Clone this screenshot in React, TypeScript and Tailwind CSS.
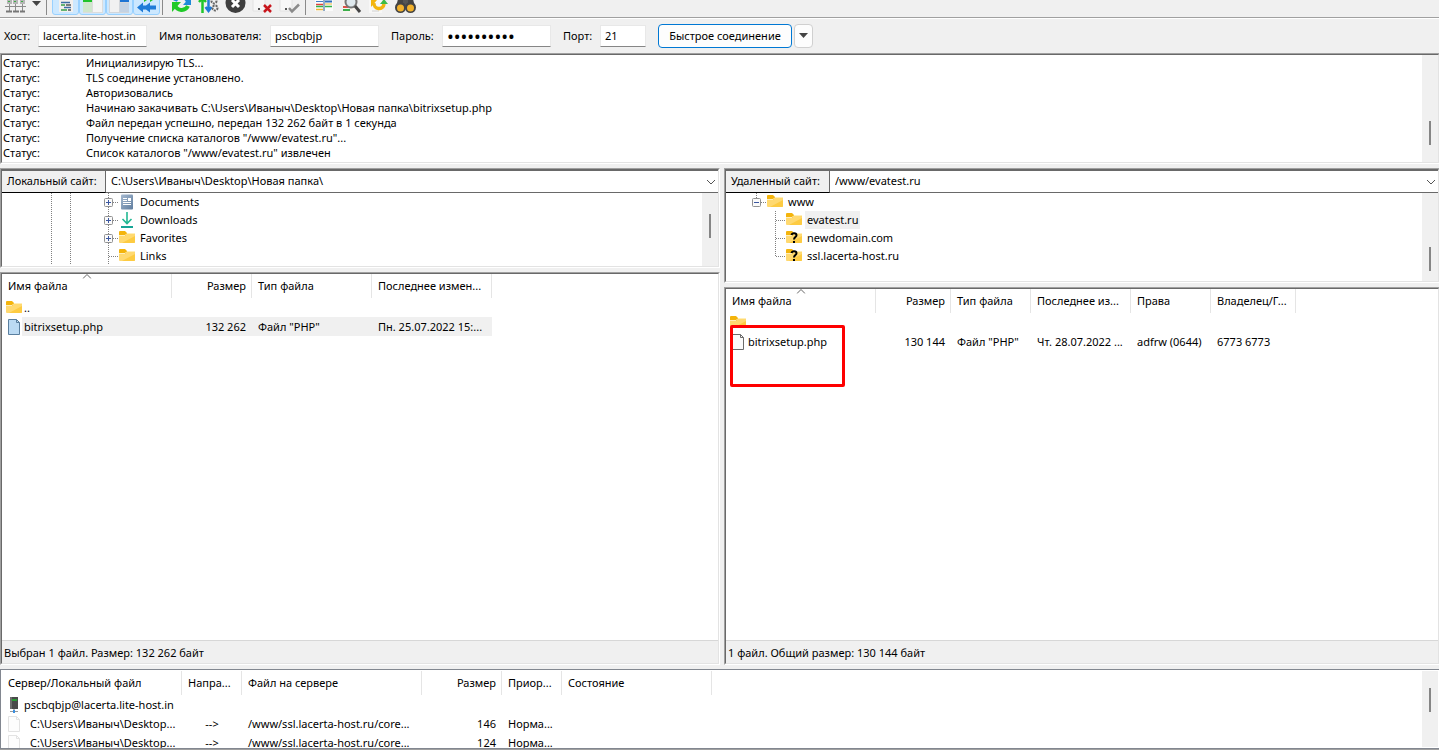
import type { ReactNode } from "react";

const Sunken = ({ className = "", children }: { className?: string; children: ReactNode }) => (
	<div
		className={`flex flex-col border border-t-[#a0a0a0] border-l-[#a0a0a0] border-r-white border-b-white ${className}`}
	>
		<div className="flex-1 min-h-0 flex flex-col relative bg-white border border-t-[#696969] border-l-[#696969] border-r-[#e3e3e3] border-b-[#e3e3e3]">
			{children}
		</div>
	</div>
);

const Scrollbar = ({ className }: { className: string }) => (
	<div className={`w-4 shrink-0 bg-[#f0f0f0] flex flex-col items-center ${className}`}>
		<div className="w-[2px] h-6 bg-[#858585]" />
	</div>
);

/* ---------- icons ---------- */

const Folder = ({ unknown = false }: { unknown?: boolean }) => (
	<svg width="16" height="16" viewBox="0 0 16 16" className="shrink-0">
		<path d="M0 2a1 1 0 0 1 1-1h5l2 2h7a1 1 0 0 1 1 1v4H0z" fill="#f4b40c" />
		<path d="M0 6h6l2-2h8v8a1 1 0 0 1-1 1H1a1 1 0 0 1-1-1z" fill="#ffd970" />
		<path d="M0 5.500h6l2-2h8" fill="none" stroke="#ffeeb8" strokeWidth="1" />
		<path d="M3 13h12a1 1 0 0 0 1-1V6z" fill="#fdcb42" />
		{unknown && (
			<>
				<path
					d="M5.500 5C6 2.500 10.500 2.500 10.500 5.200C10.500 7 8 7 8 9.500"
					fill="none"
					stroke="#000"
					strokeWidth="2"
				/>
				<rect x="7" y="11" width="2" height="2" fill="#000" />
			</>
		)}
	</svg>
);

const FileIcon = ({ fill, stroke }: { fill: string; stroke: string }) => (
	<svg width="16" height="16" viewBox="0 0 16 16" className="shrink-0">
		<path d="M2.500 .5h8l3 3v12h-11z" fill={fill} stroke={stroke} />
		<path d="M10.500 .5v3h3" fill="none" stroke={stroke} />
	</svg>
);

const DocumentsIcon = () => (
	<svg width="16" height="16" viewBox="0 0 16 16" className="shrink-0">
		<defs>
			<linearGradient id="doc" x1="0" y1="0" x2="1" y2="1">
				<stop offset="0" stopColor="#a5b9d0" />
				<stop offset="1" stopColor="#5f7d9f" />
			</linearGradient>
		</defs>
		<rect x="2" y="0.500" width="12" height="15" rx="1" fill="url(#doc)" />
		<path d="M4 4.500h4M4 6.500h4M4 8.500h8M4 10.500h8" stroke="#fff" />
		<rect x="9" y="4" width="3" height="3" fill="#fff" />
	</svg>
);

const DownloadsIcon = () => (
	<svg width="16" height="16" viewBox="0 0 16 16" className="shrink-0">
		<path d="M8 0v11M3.500 7L8 11.500L12.500 7" fill="none" stroke="#22b893" strokeWidth="1.600" />
		<path d="M2 15h12" stroke="#16a596" strokeWidth="2" />
	</svg>
);

const ServerIcon = () => (
	<svg width="16" height="16" viewBox="0 0 16 16" className="shrink-0">
		<rect x="4" y="0" width="8" height="12" fill="#4a4a4a" />
		<rect x="4" y="0" width="2" height="12" fill="#6d6d6d" />
		<path d="M6 3h5" stroke="#2a9a34" strokeWidth="2" />
		<path d="M8 12v3" stroke="#777" />
		<path d="M4 14.500h8" stroke="#9a9a9a" />
		<rect x="7" y="13" width="2" height="3" fill="#3b8fe0" />
	</svg>
);

const Chevron = () => (
	<svg
		width="10"
		height="6"
		viewBox="0 0 10 6"
		className="absolute right-[2px] top-2 pointer-events-none"
	>
		<path d="M1 1l4 4l4-4" fill="none" stroke="#555" />
	</svg>
);

const SortArrow = () => (
	<svg
		width="9"
		height="5"
		viewBox="0 0 9 5"
		className="absolute top-0 left-1/2 -translate-x-1/2"
	>
		<path d="M.5 4.500l4-4l4 4" fill="none" stroke="#666" />
	</svg>
);

const Caret = () => (
	<svg width="9" height="5" viewBox="0 0 9 5">
		<path d="M0 0h9L4.500 5z" fill="#444" />
	</svg>
);

const Doc = () => <path d="M1 0h12v18H1z" fill="#f7f7f7" stroke="#e2e2e2" />;

type Tool = { label: string; art: ReactNode };

const toggles: Tool[] = [
	{
		label: "Журнал сообщений",
		art: (
			<>
				<rect x="4" y="0" width="14" height="19" fill="#f3f0ee" />
				<path d="M6 9.500h9M9 14.500h7" stroke="#3c6ea5" strokeWidth="1.500" />
				<path d="M6 12h4M6 17h6" stroke="#36a04b" strokeWidth="1.500" />
				<path d="M11 12h5M13 17h3" stroke="#555" strokeWidth="1.500" />
			</>
		),
	},
	{
		label: "Дерево локальных каталогов",
		art: (
			<>
				<rect x="1" y="0" width="20" height="20" fill="#dcdcdc" />
				<rect x="1" y="0" width="9" height="9" fill="#1fc32a" />
				<rect x="1" y="9" width="9" height="10" fill="#cfe6cc" />
				<rect x="11" y="0" width="9" height="19" fill="#f4f4f4" />
			</>
		),
	},
	{
		label: "Дерево удаленных каталогов",
		art: (
			<>
				<rect x="0" y="0" width="20" height="20" fill="#d2d6db" />
				<rect x="1" y="0" width="9" height="19" fill="#f1f1f1" />
				<rect x="11" y="0" width="9" height="9" fill="#1d74d4" />
				<rect x="11" y="10" width="9" height="9" fill="#c3d2e3" />
			</>
		),
	},
	{
		label: "Очередь передачи",
		art: (
			<>
				<path d="M1 3h7V0l6 5l-6 4V7H1z" fill="#22c02c" />
				<path d="M11 3h3V0l6 5l-6 4V7h-3z" fill="#22c02c" />
				<path d="M1 14.500L7 9.500v3h3l4-3v3h6v4h-6v3l-4-3H7v3z" fill="#1f7bd8" />
			</>
		),
	},
];

const actions: Tool[] = [
	{
		label: "Обновить",
		art: (
			<>
				<path d="M4 8a7 7 0 0 1 13 1" fill="none" stroke="#1f8ad8" strokeWidth="4" />
				<path d="M20 3v9h-8z" fill="#1f8ad8" />
				<path d="M4 12a7 7 0 0 0 13 1" fill="none" stroke="#1fca28" strokeWidth="4" />
				<path d="M1 19V9h9z" fill="#1fca28" />
			</>
		),
	},
	{
		label: "Обработка очереди",
		art: (
			<>
				<path d="M4.500 20V5M1 9l3.500-4L8 9" fill="none" stroke="#20c52b" strokeWidth="2.500" />
				<path d="M10.500 1v16M7.500 14l3 4l3-4" fill="none" stroke="#1f7bd8" strokeWidth="2.500" />
				<circle cx="16" cy="8" r="2.500" fill="none" stroke="#666" strokeWidth="2" strokeDasharray="2 1" />
				<circle cx="17" cy="15" r="2.500" fill="none" stroke="#666" strokeWidth="2" strokeDasharray="2 1" />
			</>
		),
	},
	{
		label: "Отменить",
		art: (
			<>
				<circle cx="10.500" cy="10" r="10" fill="#3f3f3f" />
				<path d="M7 7l7 7M14 7l-7 7" stroke="#fff" strokeWidth="3" />
			</>
		),
	},
	{
		label: "Отключиться",
		art: (
			<>
				<Doc />
				<rect x="6" y="15" width="2" height="2" fill="#555" />
				<path d="M12 12l7 7M19 12l-7 7" stroke="#c8161d" strokeWidth="2.500" />
			</>
		),
	},
	{
		label: "Переподключиться",
		art: (
			<>
				<Doc />
				<rect x="6" y="15" width="2" height="2" fill="#555" />
				<path d="M10 15l3 3.500l7-7" fill="none" stroke="#8b8b8b" strokeWidth="2.500" />
			</>
		),
	},
];

const views: Tool[] = [
	{
		label: "Сравнение каталогов",
		art: (
			<>
				<rect x="1" y="0" width="18" height="18" fill="#fbfbfb" />
				<path d="M2 8.500h7" stroke="#3e7fc9" />
				<path d="M2 11.500h7" stroke="#e2433b" strokeWidth="1.500" />
				<path d="M2 13.500h7M11 13.500h7" stroke="#35b24a" strokeWidth="1.500" />
				<path d="M11 8.500h7" stroke="#2f6fbd" strokeWidth="2" />
				<path d="M11 11h7" stroke="#efb731" />
				<path d="M2 16.500h7" stroke="#efb731" strokeWidth="1.500" />
				<path d="M10 0v18" stroke="#2b5d94" />
			</>
		),
	},
	{
		label: "Фильтр",
		art: (
			<>
				<rect x="2" y="0" width="13" height="20" fill="#f7f4ef" />
				<path d="M2 14h5" stroke="#de5146" strokeWidth="2" />
				<path d="M2 17h7" stroke="#3cae4c" strokeWidth="2" />
				<circle cx="10" cy="9" r="5.500" fill="#dfe9ee" stroke="#777" strokeWidth="2" />
				<path d="M14 13l5 6" stroke="#444" strokeWidth="3" />
			</>
		),
	},
	{
		label: "Синхронный просмотр",
		art: (
			<>
				<rect x="1" y="6" width="13" height="14" fill="#f7f7f7" />
				<path d="M4 12h4M4 18h7" stroke="#d0d0d0" />
				<path d="M6 7a5 5 0 0 1 9-1" fill="none" stroke="#2795dc" strokeWidth="3" />
				<path d="M6 10a5 5 0 0 0 10 1" fill="none" stroke="#f3b50e" strokeWidth="3.500" />
				<path d="M12 11l4-5l4 5z" fill="#3dbb47" />
				<path d="M3 14V7h6z" fill="#f3b50e" />
			</>
		),
	},
	{
		label: "Поиск",
		art: (
			<>
				<path d="M3 6h5v8H1zM13 6h5l2 8h-7z" fill="#444" />
				<path d="M8 6h5v7H8z" fill="#555" />
				<circle cx="5.500" cy="14.500" r="5.500" fill="#444" />
				<circle cx="15.500" cy="14.500" r="5.500" fill="#444" />
				<circle cx="5.500" cy="15" r="3.500" fill="#f2b12b" />
				<circle cx="15.500" cy="15" r="3.500" fill="#f2b12b" />
			</>
		),
	},
];

const ToolButton = ({ tool, on = false }: { tool: Tool; on?: boolean }) => (
	<button
		aria-label={tool.label}
		className={
			on
				? "w-[27px] shrink-0 flex justify-center border border-[#99d1ff] bg-[#cce8ff] rounded-[3px]"
				: "w-[27px] shrink-0 flex justify-center border border-transparent"
		}
	>
		<svg width="21" height="21" viewBox="0 0 21 21">
			{tool.art}
		</svg>
	</button>
);

const Separator = () => <div className="w-px h-[22px] ml-[2px] mr-[5px] shrink-0 bg-[#8a8a8a]" />;

const siteManager: Tool = {
	label: "Менеджер сайтов",
	art: (
		<>
			<path d="M2 0h5v11H2zM8 0h5v11H8zM15 0h5v11h-5z" fill="#b5b5b5" />
			<path d="M3 8.500h2M9 8.500h2M16 8.500h2" stroke="#3fae49" />
			<path d="M0 13.500h21M4.500 11v8M10.500 11v8M17.500 11v8" stroke="#8c8c8c" />
			<path d="M1 18.500h6M8 18.500h6M15 18.500h5" stroke="#777" strokeWidth="2" />
		</>
	),
};

const Toolbar = () => (
	<div className="h-[17px] shrink-0 flex items-end overflow-hidden pl-[2px] pb-[2px]">
		<ToolButton tool={siteManager} />
		<button aria-label="Список сайтов" className="w-[15px] h-[14px] flex justify-center">
			<Caret />
		</button>
		<Separator />
		{toggles.map((t) => (
			<ToolButton key={t.label} tool={t} on />
		))}
		<Separator />
		{actions.map((t) => (
			<ToolButton key={t.label} tool={t} />
		))}
		<Separator />
		{views.map((t) => (
			<ToolButton key={t.label} tool={t} />
		))}
	</div>
);

/* ---------- quick connect ---------- */

const field = "h-[22px] bg-white px-1 border border-[#e8e8e8] border-b-[#868686] outline-none";

const QuickConnect = () => (
	<form
		className="h-[34px] shrink-0 flex items-center pb-px pl-1"
		onSubmit={(e) => e.preventDefault()}
	>
		<label htmlFor="host" className="w-[34px]">
			Хост:
		</label>
		<input id="host" className={`${field} w-[109px] mr-3`} defaultValue="lacerta.lite-host.in" />
		<label htmlFor="user" className="w-[111px]">
			Имя пользователя:
		</label>
		<input id="user" className={`${field} w-[109px] mr-3`} defaultValue="pscbqbjp" />
		<label htmlFor="pass" className="w-[51px]">
			Пароль:
		</label>
		<input
			id="pass"
			type="password"
			className={`${field} w-[109px] mr-3 text-[18px]`}
			defaultValue="0123456789"
			autoComplete="off"
		/>
		<label htmlFor="port" className="w-[37px]">
			Порт:
		</label>
		<input id="port" className={`${field} w-[46px] mr-3`} defaultValue="21" />
		<button className="h-6 w-[134px] bg-[#fdfdfd] border border-[#0078d4] rounded-[4px]">
			Быстрое соединение
		</button>
		<button
			type="button"
			aria-label="История соединений"
			className="h-6 w-[19px] ml-[2px] flex items-center justify-center bg-[#fdfdfd] border border-[#d0d0d0] rounded-[4px]"
		>
			<Caret />
		</button>
	</form>
);

/* ---------- message log ---------- */

const messages = [
	"Инициализирую TLS...",
	"TLS соединение установлено.",
	"Авторизовались",
	"Начинаю закачивать C:\\Users\\Иваныч\\Desktop\\Новая папка\\bitrixsetup.php",
	"Файл передан успешно, передан 132 262 байт в 1 секунда",
	'Получение списка каталогов "/www/evatest.ru"...',
	'Список каталогов "/www/evatest.ru" извлечен',
];

const Log = () => (
	<Sunken className="h-[111px] shrink-0">
		<div className="flex flex-1">
			<ul className="flex-1 pl-px">
				{messages.map((m) => (
					<li key={m} className="flex leading-[15px]">
						<span className="w-[83px]">Статус:</span>
						<span>{m}</span>
					</li>
				))}
			</ul>
			<Scrollbar className="pt-[66px]" />
		</div>
	</Sunken>
);

/* ---------- directory trees ---------- */

const PathBar = ({ id, label, path }: { id: string; label: string; path: string }) => (
	<div className="h-[23px] shrink-0 flex border-t border-[#696969]">
		<label
			htmlFor={id}
			className="w-[104px] shrink-0 flex items-center pl-[5px] pb-[2px] bg-[#f0f0f0] border-r border-b border-r-[#696969] border-b-black"
		>
			{label}
		</label>
		<div className="flex-1 relative border-b border-[#696969]">
			<select
				id={id}
				className="appearance-none w-full h-full pl-[5px] pb-[2px] bg-white outline-none"
			>
				<option>{path}</option>
			</select>
			<Chevron />
		</div>
	</div>
);

const dots = { stroke: "#808080", strokeDasharray: "1 1" };

const Expander = ({ x, open = false }: { x: number; open?: boolean }) => (
	<>
		<rect x={x + 0.5} y="5.500" width="8" height="8" rx="1" fill="#fafafa" stroke="#919191" />
		<path d={`M${x + 2} 9.500h5`} stroke="#3b57a0" />
		{!open && <path d={`M${x + 4.5} 7v5`} stroke="#3b57a0" />}
	</>
);

const localTree = [
	{ name: "Documents", icon: <DocumentsIcon />, plus: true },
	{ name: "Downloads", icon: <DownloadsIcon />, plus: true },
	{ name: "Favorites", icon: <Folder />, plus: true },
	{ name: "Links", icon: <Folder />, plus: false },
];

const LocalTree = () => (
	<div className="flex flex-1 min-h-0">
		<ul className="flex-1">
			{localTree.map((n) => (
				<li key={n.name} className="h-[18px] flex items-center">
					<svg width="117" height="18" viewBox="0 0 117 18" className="shrink-0">
						<path d="M49.500 0v18M68.500 0v18M106.500 0v18M107 9.500h10" {...dots} />
						{n.plus && <Expander x={102} />}
					</svg>
					{n.icon}
					<span className="pl-[5px]">{n.name}</span>
				</li>
			))}
		</ul>
		<Scrollbar className="pt-[21px]" />
	</div>
);

const remoteTree = [
	{ name: "evatest.ru", unknown: false, last: false },
	{ name: "newdomain.com", unknown: true, last: false },
	{ name: "ssl.lacerta-host.ru", unknown: true, last: true },
];

const RemoteTree = () => (
	<div className="flex flex-1 min-h-0">
		<ul className="flex-1">
			<li>
				<div className="h-[18px] flex items-center">
					<svg width="41" height="18" viewBox="0 0 41 18" className="shrink-0">
						<path d="M30.500 0v9M31 9.500h10" {...dots} />
						<Expander x={26} open />
					</svg>
					<Folder />
					<span className="pl-[5px]">www</span>
				</div>
				<ul>
					{remoteTree.map((n) => (
						<li key={n.name} className="h-[18px] flex items-center">
							<svg width="60" height="18" viewBox="0 0 60 18" className="shrink-0">
								<path d={n.last ? "M49.500 0v9M50 9.500h10" : "M49.500 0v18M50 9.500h10"} {...dots} />
							</svg>
							<Folder unknown={n.unknown} />
							<span
								className={
									n.name === "evatest.ru"
										? "ml-[3px] px-[2px] leading-[18px] bg-[#f0f0f0]"
										: "ml-[3px] px-[2px] leading-[18px]"
								}
							>
								{n.name}
							</span>
						</li>
					))}
				</ul>
			</li>
		</ul>
		<Scrollbar className="pt-[54px]" />
	</div>
);

/* ---------- tables ---------- */

const HeadCell = ({
	children,
	right = false,
	sorted = false,
}: {
	children: ReactNode;
	right?: boolean;
	sorted?: boolean;
}) => (
	<th
		className={
			right
				? "relative h-6 px-[5px] font-normal text-right border-r border-[#e5e5e5]"
				: "relative h-6 px-[6px] font-normal text-left border-r border-[#e5e5e5]"
		}
	>
		{sorted && <SortArrow />}
		{children}
	</th>
);

const StatusBar = ({ children }: { children: ReactNode }) => (
	<div className="h-[23px] shrink-0 flex items-center pl-[2px] pt-px bg-[#f0f0f0] border-t border-[#d7d7d7]">
		{children}
	</div>
);

const table = "table-fixed whitespace-nowrap border-separate border-spacing-0";

const LocalFiles = () => (
	<Sunken className="flex-1">
		<div className="flex-1">
			<table className={`${table} w-[490px]`}>
				<colgroup>
					<col className="w-[170px]" />
					<col className="w-[80px]" />
					<col className="w-[120px]" />
					<col className="w-[120px]" />
				</colgroup>
				<thead>
					<tr>
						<HeadCell sorted>Имя файла</HeadCell>
						<HeadCell right>Размер</HeadCell>
						<HeadCell>Тип файла</HeadCell>
						<HeadCell>Последнее измен...</HeadCell>
					</tr>
				</thead>
				<tbody>
					<tr className="h-[19px]">
						<td>
							<div className="flex items-center pl-1">
								<Folder />
								<span className="pl-[2px]">..</span>
							</div>
						</td>
						<td colSpan={3} />
					</tr>
					<tr className="h-[19px]">
						<td>
							<div className="flex items-center pl-1">
								<FileIcon fill="#bbdaf3" stroke="#5a7f9f" />
								<span className="flex-1 pl-[2px] leading-[19px] bg-[#f0f0f0]">bitrixsetup.php</span>
							</div>
						</td>
						<td className="px-[6px] text-right bg-[#f0f0f0]">132 262</td>
						<td className="px-[6px] bg-[#f0f0f0]">Файл "PHP"</td>
						<td className="px-[6px] bg-[#f0f0f0]">Пн. 25.07.2022 15:...</td>
					</tr>
				</tbody>
			</table>
		</div>
		<StatusBar>Выбран 1 файл. Размер: 132 262 байт</StatusBar>
	</Sunken>
);

const RemoteFiles = () => (
	<Sunken className="flex-1">
		<div className="flex-1">
			<table className={`${table} w-[570px]`}>
				<colgroup>
					<col className="w-[150px]" />
					<col className="w-[75px]" />
					<col className="w-[80px]" />
					<col className="w-[100px]" />
					<col className="w-[80px]" />
					<col className="w-[85px]" />
				</colgroup>
				<thead>
					<tr>
						<HeadCell sorted>Имя файла</HeadCell>
						<HeadCell right>Размер</HeadCell>
						<HeadCell>Тип файла</HeadCell>
						<HeadCell>Последнее из...</HeadCell>
						<HeadCell>Права</HeadCell>
						<HeadCell>Владелец/Г...</HeadCell>
					</tr>
				</thead>
				<tbody>
					<tr className="h-[19px]">
						<td className="pl-1">
							<Folder />
						</td>
						<td colSpan={5} />
					</tr>
					<tr className="h-[19px]">
						<td>
							<div className="flex items-center pl-1">
								<FileIcon fill="#fbfbfb" stroke="#6b6b6b" />
								<span className="pl-[2px]">bitrixsetup.php</span>
							</div>
						</td>
						<td className="px-[6px] text-right">130 144</td>
						<td className="px-[6px]">Файл "PHP"</td>
						<td className="px-[6px]">Чт. 28.07.2022 ...</td>
						<td className="px-[6px]">adfrw (0644)</td>
						<td className="px-[6px]">6773 6773</td>
					</tr>
				</tbody>
			</table>
		</div>
		<StatusBar>1 файл. Общий размер: 130 144 байт</StatusBar>
		<div className="absolute left-1 top-9 w-[115px] h-[62px] border-[3px] border-[#fe0000] rounded-[2px] pointer-events-none" />
	</Sunken>
);

const queue = [{ size: 146 }, { size: 124 }];

const Queue = () => (
	<div className="h-20 shrink-0 flex overflow-hidden bg-white border border-[#828790] p-px">
		<div className="flex-1 min-w-0">
			<table className={`${table} w-[710px]`}>
				<colgroup>
					<col className="w-[180px]" />
					<col className="w-[60px]" />
					<col className="w-[180px]" />
					<col className="w-[80px]" />
					<col className="w-[60px]" />
					<col className="w-[150px]" />
				</colgroup>
				<thead>
					<tr>
						<HeadCell>Сервер/Локальный файл</HeadCell>
						<HeadCell>Напра...</HeadCell>
						<HeadCell>Файл на сервере</HeadCell>
						<HeadCell right>Размер</HeadCell>
						<HeadCell>Приор...</HeadCell>
						<HeadCell>Состояние</HeadCell>
					</tr>
				</thead>
				<tbody>
					<tr className="h-[19px]">
						<td colSpan={6}>
							<div className="flex items-center pl-1">
								<ServerIcon />
								<span className="pl-[2px]">pscbqbjp@lacerta.lite-host.in</span>
							</div>
						</td>
					</tr>
					{queue.map((q) => (
						<tr key={q.size} className="h-[19px]">
							<td>
								<div className="flex items-center pl-1">
									<FileIcon fill="#fdfdfd" stroke="#e3e3e3" />
									<span className="pl-2">C:\Users\Иваныч\Desktop...</span>
								</div>
							</td>
							<td className="text-center">--&gt;</td>
							<td className="px-[6px]">/www/ssl.lacerta-host.ru/core...</td>
							<td className="px-[6px] text-right">{q.size}</td>
							<td className="px-[6px]">Норма...</td>
							<td />
						</tr>
					))}
				</tbody>
			</table>
		</div>
		<Scrollbar className="pt-[17px]" />
	</div>
);

const App = () => {
	return (
		<div className="h-screen flex flex-col overflow-hidden bg-[#f0f0f0] text-black text-[11px] leading-4 font-['Noto_Sans','Open_Sans',sans-serif]">
			<Toolbar />
			<div className="h-[2px] shrink-0 border-t border-[#a0a0a0] bg-white" />
			<QuickConnect />
			<main className="flex-1 min-h-0 flex flex-col gap-1 -mr-px">
				<Log />
				<div className="flex-1 min-h-0 grid grid-cols-[720fr_716fr] gap-1">
					<section className="flex flex-col gap-1">
						<Sunken className="h-[100px] shrink-0">
							<PathBar id="local" label="Локальный сайт:" path="C:\Users\Иваныч\Desktop\Новая папка\" />
							<LocalTree />
						</Sunken>
						<LocalFiles />
					</section>
					<section className="flex flex-col gap-1">
						<Sunken className="h-[115px] shrink-0">
							<PathBar id="remote" label="Удаленный сайт:" path="/www/evatest.ru" />
							<RemoteTree />
						</Sunken>
						<RemoteFiles />
					</section>
				</div>
				<Queue />
			</main>
			<div className="h-[2px] shrink-0 border-t border-[#a0a0a0] bg-white" />
		</div>
	);
};

export default App;
